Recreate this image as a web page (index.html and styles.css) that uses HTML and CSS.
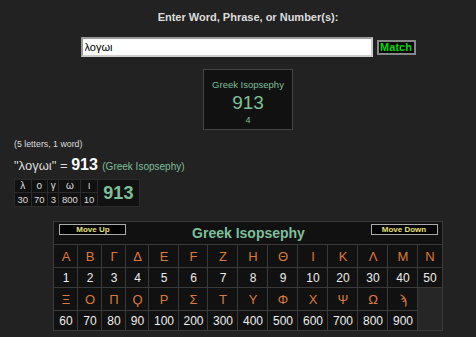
FILE: index.html
```html
<!DOCTYPE html>
<html lang="en">
<head>
    <meta charset="UTF-8">
    <title>Gematria Calculator</title>
    <link rel="stylesheet" href="styles.css">
</head>
<body>
    <div class="search">
        <h1 class="prompt">Enter Word, Phrase, or Number(s):</h1>
        <form class="search-form">
            <input type="text" class="search-input" value="λογωι">
            <button type="button" class="match-btn">Match</button>
        </form>
        <div class="result-box">
            <div class="result-name">Greek Isopsephy</div>
            <div class="result-value">913</div>
            <div class="result-count">4</div>
        </div>
    </div>

    <div class="summary">
        <p class="counts">(5 letters, 1 word)</p>
        <p class="equation"><span class="phrase">"λογωι" = </span><b class="total">913</b> <span class="cipher-name">(Greek Isopsephy)</span></p>
        <table class="breakdown">
            <tr>
                <td class="b-letter">λ</td>
                <td class="b-letter">ο</td>
                <td class="b-letter">γ</td>
                <td class="b-letter">ω</td>
                <td class="b-letter">ι</td>
                <td class="b-sum" rowspan="2">913</td>
            </tr>
            <tr>
                <td class="b-num">30</td>
                <td class="b-num">70</td>
                <td class="b-num">3</td>
                <td class="b-num">800</td>
                <td class="b-num">10</td>
            </tr>
        </table>
    </div>

    <div class="cipher-wrap">
        <table class="cipher">
            <colgroup>
                <col class="w24"><col class="w24"><col class="w24"><col class="w23">
                <col class="w30"><col class="w29"><col class="w30"><col class="w30">
                <col class="w30"><col class="w30"><col class="w30"><col class="w30">
                <col class="w30"><col class="w24">
            </colgroup>
            <tr>
                <td class="cipher-head" colspan="14">
                    <div class="head-bar">
                        <button type="button" class="move-btn">Move Up</button>
                        <span class="cipher-title">Greek Isopsephy</span>
                        <button type="button" class="move-btn">Move Down</button>
                    </div>
                </td>
            </tr>
            <tr class="letters">
                <td>Α</td><td>Β</td><td>Γ</td><td>Δ</td><td>Ε</td><td>F</td><td>Ζ</td>
                <td>Η</td><td>Θ</td><td>Ι</td><td>Κ</td><td>Λ</td><td>Μ</td><td>Ν</td>
            </tr>
            <tr class="values">
                <td>1</td><td>2</td><td>3</td><td>4</td><td>5</td><td>6</td><td>7</td>
                <td>8</td><td>9</td><td>10</td><td>20</td><td>30</td><td>40</td><td>50</td>
            </tr>
            <tr class="letters">
                <td>Ξ</td><td>Ο</td><td>Π</td><td>Ϙ</td><td>Ρ</td><td>Σ</td><td>Τ</td>
                <td>Υ</td><td>Φ</td><td>Χ</td><td>Ψ</td><td>Ω</td><td>ϡ</td>
            </tr>
            <tr class="values">
                <td>60</td><td>70</td><td>80</td><td>90</td><td>100</td><td>200</td><td>300</td>
                <td>400</td><td>500</td><td>600</td><td>700</td><td>800</td><td>900</td>
            </tr>
        </table>
    </div>
</body>
</html>
```

FILE: styles.css
```css
body {
    font-family: "Liberation Sans", Arial, sans-serif;
    margin: 0;
    padding: 0;
    background: #222;
    color: #ddd;
}
.search {
    padding: 10px 0 0 20px;
    text-align: center;
}
.prompt {
    margin: 0;
    font-size: 11px;
    line-height: 14px;
    font-weight: bold;
    color: #ddd;
}
.search-form {
    display: flex;
    justify-content: center;
    align-items: center;
    gap: 4px;
    margin: 13px 0 0;
}
.search-input {
    width: 292px;
    height: 20px;
    box-sizing: border-box;
    padding: 0 2px;
    border: 2px solid #999;
    border-right-color: #ccc;
    border-bottom-color: #ccc;
    background: #fff;
    color: #000;
    font-family: "Liberation Sans", Arial, sans-serif;
    font-size: 11px;
}
.match-btn {
    width: 39px;
    height: 15px;
    box-sizing: border-box;
    padding: 0;
    border: 2px solid #888;
    background: #000;
    color: #0d0;
    font-family: "Liberation Sans", Arial, sans-serif;
    font-size: 11px;
    font-weight: bold;
    line-height: 11px;
}
.result-box {
    width: 88px;
    height: 59px;
    margin: 12px auto 0;
    background: #111;
    border: 1px solid #444;
    color: #7fbf99;
}
.result-name {
    padding-top: 9px;
    font-size: 9.5px;
    line-height: 12px;
}
.result-value {
    margin-top: 2px;
    font-size: 19px;
    line-height: 20px;
}
.result-count {
    margin-top: 2px;
    font-size: 9px;
    line-height: 11px;
}
.summary {
    padding-left: 14px;
}
.counts {
    margin: 9px 0 0;
    font-size: 8.8px;
    line-height: 11px;
    color: #ddd;
}
.equation {
    margin: 6px 0 0;
    line-height: 18px;
    white-space: nowrap;
}
.phrase {
    font-size: 13px;
    color: #ddd;
}
.total {
    font-size: 16px;
    color: #fff;
}
.cipher-name {
    font-size: 10px;
    color: #7fbf99;
}
.breakdown {
    margin-top: 3px;
    border-collapse: collapse;
    background: #111;
}
.breakdown td {
    border: 1px solid #2a2a2a;
    padding: 0 2.5px;
    text-align: center;
    color: #ddd;
}
.b-letter {
    height: 12px;
    font-size: 10px;
    line-height: 12px;
}
.b-num {
    height: 13px;
    font-size: 9.5px;
    line-height: 13px;
}
.b-sum {
    width: 36px;
    font-size: 18px;
    font-weight: bold;
    color: #7fbf99 !important;
}
.cipher-wrap {
    padding: 14px 0 0 20px;
}
.cipher {
    width: 388px;
    margin: 0 auto;
    table-layout: fixed;
    border-collapse: collapse;
    border: 1px solid #3a3a3a;
    background: #262626;
}
.w24 { width: 24px; }
.w23 { width: 23px; }
.w29 { width: 29px; }
.w30 { width: 30px; }
.cipher td {
    border: 1px solid #3a3a3a;
    padding: 0;
    background: #111;
    text-align: center;
}
.cipher-head {
    height: 22px;
}
.head-bar {
    display: flex;
    justify-content: space-between;
    align-items: flex-start;
    padding: 0 4px 0 5px;
    height: 22px;
}
.move-btn {
    width: 67px;
    height: 11px;
    margin-top: 2px;
    box-sizing: border-box;
    padding: 0;
    border: 1px solid #aaa;
    background: #000;
    color: #e8e07a;
    font-family: "Liberation Sans", Arial, sans-serif;
    font-size: 8px;
    font-weight: bold;
    line-height: 9px;
}
.cipher-title {
    align-self: center;
    font-size: 14px;
    font-weight: bold;
    color: #7fbf99;
}
.letters td {
    height: 22px;
    font-size: 13px;
    color: #dc7a3c;
}
.values td {
    height: 19px;
    font-size: 12px;
    color: #eee;
}
```
